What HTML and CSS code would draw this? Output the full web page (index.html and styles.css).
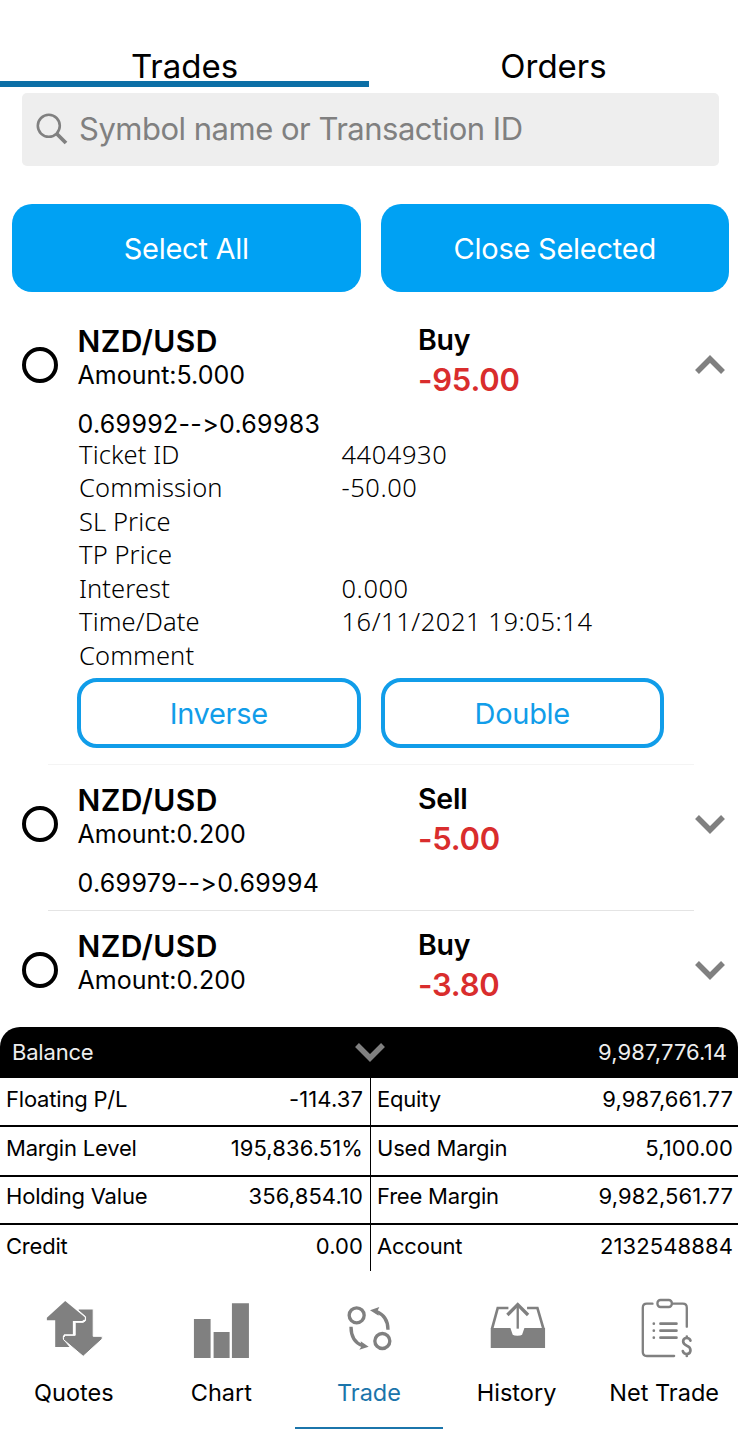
FILE: index.html
```html
<!DOCTYPE html>
<html lang="en">
<head>
<meta charset="utf-8">
<title>Trades</title>
<link rel="stylesheet" href="styles.css">
</head>
<body>
<div class="app">
  <nav class="tabs">
    <div class="tab active"><span>Trades</span></div>
    <div class="tab"><span>Orders</span></div>
  </nav>
  <div class="search">
    <svg class="search-icon" viewBox="0 0 32 32"><circle cx="12.8" cy="12.8" r="11" fill="none" stroke="#808080" stroke-width="2.6"/><path d="M20.5 20.5L30 30" stroke="#808080" stroke-width="3.8"/></svg>
    <span>Symbol name or Transaction ID</span>
  </div>
  <div class="actions">
    <div class="btn"><span>Select All</span></div>
    <div class="btn"><span>Close Selected</span></div>
  </div>

  <main class="trades">
    <section class="trade open">
      <div class="summary">
        <span class="radio"></span>
        <div class="instrument"><span class="pair">NZD/USD</span><span class="amount">Amount:5.000</span></div>
        <div class="result"><span class="side">Buy</span><span class="profit">-95.00</span></div>
        <svg class="chevron" viewBox="0 0 30 20"><path d="M2 17L15 4L28 17" /></svg>
      </div>
      <div class="prices"><span>0.69992--&gt;0.69983</span></div>
      <dl class="details">
        <dt>Ticket ID</dt><dd>4404930</dd>
        <dt>Commission</dt><dd>-50.00</dd>
        <dt>SL Price</dt><dd></dd>
        <dt>TP Price</dt><dd></dd>
        <dt>Interest</dt><dd>0.000</dd>
        <dt>Time/Date</dt><dd>16/11/2021 19:05:14</dd>
        <dt>Comment</dt><dd></dd>
      </dl>
      <div class="trade-actions">
        <div class="outline-btn"><span>Inverse</span></div>
        <div class="outline-btn"><span>Double</span></div>
      </div>
    </section>
    <section class="trade">
      <div class="summary">
        <span class="radio"></span>
        <div class="instrument"><span class="pair">NZD/USD</span><span class="amount">Amount:0.200</span></div>
        <div class="result"><span class="side">Sell</span><span class="profit">-5.00</span></div>
        <svg class="chevron" viewBox="0 0 30 20"><path d="M2 3L15 16L28 3" /></svg>
      </div>
      <div class="prices"><span>0.69979--&gt;0.69994</span></div>
    </section>
    <section class="trade last">
      <div class="summary">
        <span class="radio"></span>
        <div class="instrument"><span class="pair">NZD/USD</span><span class="amount">Amount:0.200</span></div>
        <div class="result"><span class="side">Buy</span><span class="profit">-3.80</span></div>
        <svg class="chevron" viewBox="0 0 30 20"><path d="M2 3L15 16L28 3" /></svg>
      </div>
    </section>
  </main>

  <section class="account">
    <div class="balance">
      <span class="label">Balance</span>
      <svg class="chevron" viewBox="0 0 30 20"><path d="M2 3L15 16L28 3" /></svg>
      <span class="value">9,987,776.14</span>
    </div>
    <div class="grid">
      <div class="cell"><span class="label">Floating P/L</span><span class="value">-114.37</span></div>
      <div class="cell"><span class="label">Equity</span><span class="value">9,987,661.77</span></div>
      <div class="cell"><span class="label">Margin Level</span><span class="value">195,836.51%</span></div>
      <div class="cell"><span class="label">Used Margin</span><span class="value">5,100.00</span></div>
      <div class="cell short"><span class="label">Holding Value</span><span class="value">356,854.10</span></div>
      <div class="cell short"><span class="label">Free Margin</span><span class="value">9,982,561.77</span></div>
      <div class="cell"><span class="label">Credit</span><span class="value">0.00</span></div>
      <div class="cell"><span class="label">Account</span><span class="value">2132548884</span></div>
    </div>
  </section>

  <nav class="bottom-nav">
    <div class="nav-item">
      <svg viewBox="131.4 24 180 186"><path fill="#808080" d="M195 33L254 82V89H251L246 93H218V133H192L188 139V147L208 171H165V91H140V83Z"/><path fill="#808080" stroke="#fff" stroke-width="3" d="M234 57H279V139H306V147L249 199L190 149V142L196 136H225V97H249L256 92V80L234 61Z"/></svg>
      <span>Quotes</span>
    </div>
    <div class="nav-item">
      <svg viewBox="574.2 24 180 186"><path fill="#808080" d="M583 87H633V204H583ZM642 126H690V204H642ZM697 40H748V204H697Z"/></svg>
      <span>Chart</span>
    </div>
    <div class="nav-item current">
      <svg viewBox="267 24 180 186"><g fill="none" stroke="#808080" stroke-width="10"><circle cx="320" cy="76" r="22.5"/><circle cx="397" cy="153" r="22.5"/><path d="M303 110Q303 155 338 167M414 119Q414 78 378 64"/></g><path fill="#808080" d="M356 170L328 179L335 168L332 154ZM360 61L388 51L382 64L386 77Z"/></svg>
      <span>Trade</span>
    </div>
    <div class="nav-item">
      <svg viewBox="-4.2 24 180 186"><path fill="#808080" d="M7 114H66L73 134Q77 137 87 137Q97 137 101 134L108 114H170V174H7Z"/><path fill="none" stroke="#808080" stroke-width="8" d="M11 116L28 54H60M165 116L147 54H116"/><path fill="none" stroke="#808080" stroke-width="10" d="M57 75L88 44L119 75"/><path stroke="#808080" stroke-width="7" d="M88 42V116"/></svg>
      <span>History</span>
    </div>
    <div class="nav-item">
      <svg viewBox="438.6 24 180 186"><g fill="none" stroke="#808080" stroke-width="7" stroke-linecap="round"><path d="M494 41H477Q465 41 465 53V186Q465 198 477 198H559M555 41H585Q597 41 597 53V110"/><rect x="509" y="30" width="43" height="21" rx="9"/><path stroke-width="8" d="M518 101H566M518 122H566M518 143H566M498 101H498.1M498 122H498.1M498 143H498.1"/><path stroke-width="8" d="M608 152Q606 144 597 144Q586 144 586 154Q586 163 597 167Q608 171 608 181Q608 192 597 192Q587 192 585 183M597 140V144M597 192V198"/></g></svg>
      <span>Net Trade</span>
    </div>
  </nav>
</div>
</body>
</html>
```
FILE: styles.css
```css
* { box-sizing: border-box; }
body {
  margin: 0;
  background: #fff;
  color: #000;
  font-family: Inter, "Liberation Sans", sans-serif;
  font-feature-settings: "calt" 0;
}
.app {
  width: 738px;
  height: 1442px;
  display: flex;
  flex-direction: column;
  overflow: hidden;
}
span, dt, dd { white-space: nowrap; }

.tabs { display: flex; height: 87px; padding-top: 44px; }
.tab {
  flex: 1;
  display: flex;
  justify-content: center;
  border-bottom: 6px solid transparent;
  font-size: 33px;
  line-height: 44px;
  height: 43px;
}
.tab.active { border-color: #0c6fa6; }

.search {
  display: flex;
  align-items: center;
  gap: 11px;
  height: 73px;
  margin: 6px 19px 0 22px;
  padding: 0 14px 2px;
  border-radius: 5px;
  background: #eee;
  color: #808080;
  font-size: 31px;
  letter-spacing: -0.5px;
}
.search-icon { width: 32px; height: 32px; }

.actions { display: flex; gap: 20px; padding: 38px 9px 0 12px; }
.btn {
  flex: 1;
  height: 88px;
  border-radius: 20px;
  background: #00a1f3;
  color: #fff;
  font-size: 29px;
  letter-spacing: -0.25px;
  line-height: 90px;
  text-align: center;
}

.trades { flex: none; height: 735px; padding-top: 14px; overflow: hidden; }
.trade { position: relative; height: 146px; }
.trade.open { height: 459px; }
.trade:not(.last)::after {
  content: "";
  position: absolute;
  left: 48px;
  right: 44px;
  bottom: 0;
  height: 1px;
  background: #e4e4e4;
}
.trade.open::after { background: #f4f4f4; }
.summary { display: flex; height: 98px; padding: 14px 13px 0 21.5px; }
.radio {
  width: 36px;
  height: 36px;
  margin-top: 27px;
  border: 4px solid #000;
  border-radius: 50%;
}
.instrument, .result { display: flex; flex-direction: column; }
.instrument { width: 360.5px; padding-left: 20px; }
.pair { font-size: 30px; font-weight: 600; letter-spacing: 0.4px; line-height: 42px; }
.amount { font-size: 25px; line-height: 27px; }
.side { font-size: 28.5px; font-weight: 600; letter-spacing: -0.2px; line-height: 40px; }
.profit { font-size: 31px; font-weight: 600; letter-spacing: -0.2px; line-height: 39px; color: #d92d2d; }
.chevron { width: 30px; height: 20px; fill: none; stroke: #808080; stroke-width: 5.5; }
.summary .chevron { margin: 35px 0 0 auto; }
.prices { padding-left: 77.5px; font-size: 25px; letter-spacing: 0.3px; line-height: 40px; }
.details {
  display: grid;
  grid-template-columns: 262.5px 1fr;
  grid-auto-rows: 33.5px;
  margin: -6.5px 0 0;
  padding-left: 79px;
  font: 350 25.5px/33.5px "Noto Sans", "Open Sans", sans-serif;
  letter-spacing: 0.1px;
  color: #000;
}
.details dd { margin: 0; letter-spacing: 0.55px; }
.trade-actions { display: flex; gap: 20px; margin: 5.5px 74px 0 77px; }
.outline-btn {
  flex: 1;
  height: 70px;
  border: 4px solid #119de9;
  border-radius: 20px;
  color: #119de9;
  font-size: 29px;
  letter-spacing: -0.3px;
  line-height: 63px;
  text-align: center;
}

.account { font-size: 22px; }
.balance {
  display: flex;
  align-items: center;
  height: 51px;
  padding: 0 11px 2px 12px;
  border-radius: 20px 20px 0 0;
  background: #000;
  color: #eee;
}
.balance span { flex: 1; }
.label { letter-spacing: -0.2px; }
.value { letter-spacing: 0.1px; text-align: right; }
.grid { display: grid; grid-template-columns: 371px 367px; grid-template-rows: 49px 50px 48px 46px; }
.cell {
  display: flex;
  justify-content: space-between;
  padding: 0 5px 0 6px;
  line-height: 43px;
  border-bottom: 2px solid #000;
}
.cell:nth-child(odd) { border-right: 1px solid #000; padding-right: 7px; }
.cell:nth-last-child(-n+2) { border-bottom: 0; }
.cell.short { line-height: 39px; }

.bottom-nav { display: flex; height: 158px; padding-top: 27px; }
.nav-item {
  flex: 1;
  display: flex;
  flex-direction: column;
  align-items: center;
  font-size: 23.5px;
}
.nav-item svg { width: 60px; height: 62px; }
.nav-item span { margin-top: 13px; line-height: 40px; }
.nav-item.current { height: 131px; border-bottom: 2px solid #1b75ab; color: #1b75ab; }
```
